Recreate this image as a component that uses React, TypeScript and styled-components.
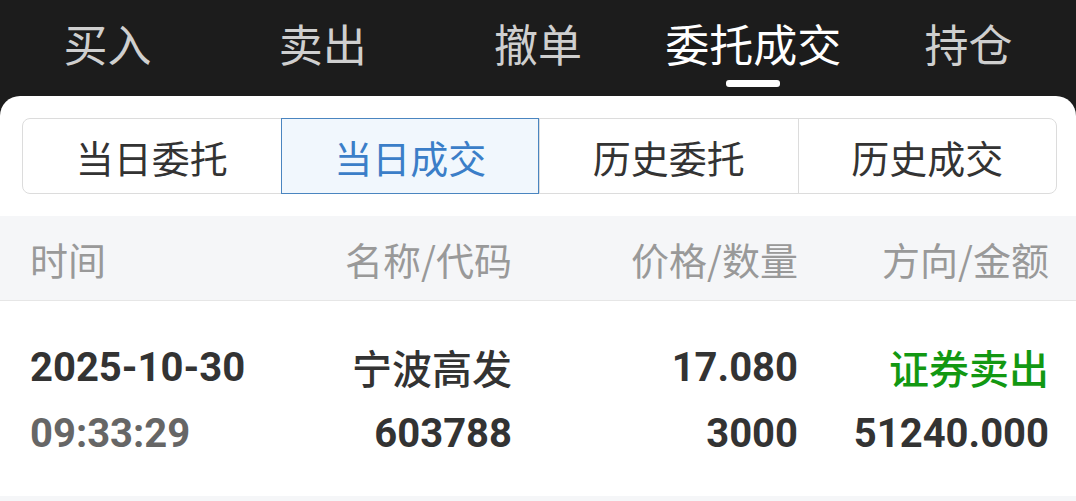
import styled, { createGlobalStyle } from 'styled-components';

const GlobalStyle = createGlobalStyle`
  html, body {
    margin: 0;
    padding: 0;
    background: #1c1c1c;
  }
  body {
    font-family: "Noto Sans CJK SC", "Noto Sans", sans-serif;
    width: 1076px;
    height: 501px;
    overflow: hidden;
  }
`;

const NUM_FONT = `Roboto, "Noto Sans CJK SC", sans-serif`;

const NavBar = styled.nav`
  display: flex;
  height: 96px;
  background: #1c1c1c;
`;

const NavTab = styled.div`
  flex: 1;
  display: flex;
  flex-direction: column;
  align-items: center;
  padding-top: 18px;
  box-sizing: border-box;
`;

const NavLabel = styled.span<{ $active?: boolean }>`
  font-size: 44px;
  line-height: 50px;
  color: ${(p) => (p.$active ? '#ffffff' : '#cfcfcf')};
  white-space: nowrap;
`;

const NavIndicator = styled.span<{ $active?: boolean }>`
  margin-top: 12px;
  width: 54px;
  height: 7px;
  border-radius: 3px;
  background: ${(p) => (p.$active ? '#ffffff' : 'transparent')};
`;

const Card = styled.main`
  background: #ffffff;
  border-radius: 20px 20px 0 0;
  height: 405px;
  overflow: hidden;
  display: flex;
  flex-direction: column;
`;

const Segments = styled.div`
  display: flex;
  margin: 22px 19px 22px 22px;
  height: 76px;
  border: 1px solid #dcdcdc;
  border-radius: 8px;
  box-sizing: border-box;
`;

const Segment = styled.div<{ $active?: boolean }>`
  flex: 1;
  display: flex;
  align-items: center;
  justify-content: center;
  font-size: 38px;
  color: ${(p) => (p.$active ? '#3b7ec8' : '#333333')};
  background: ${(p) => (p.$active ? '#f1f7fd' : 'transparent')};
  border-left: 1px solid #dcdcdc;
  margin: -1px 0;
  box-sizing: border-box;
  outline: ${(p) => (p.$active ? '1px solid #4a85c0' : 'none')};
  outline-offset: -1px;

  &:first-child {
    border-left: none;
  }
`;

const Grid = styled.div`
  display: grid;
  grid-template-columns: 230px 252px 286px 251px;
  padding: 0 27px 0 30px;
`;

const HeaderRow = styled(Grid)`
  height: 84px;
  align-items: center;
  background: #f5f6f8;
  border-bottom: 1px solid #e6e6e6;
`;

const HeaderCell = styled.div<{ $left?: boolean }>`
  font-size: 38px;
  color: #999999;
  text-align: ${(p) => (p.$left ? 'left' : 'right')};
  white-space: nowrap;
`;

const DataRow = styled(Grid)`
  padding-top: 33px;
  padding-bottom: 30px;
  grid-auto-rows: 66px;
  align-items: center;
`;

const Cell = styled.div<{ $left?: boolean; $tone?: 'dark' | 'gray' | 'green'; $cjk?: boolean }>`
  font-family: ${(p) => (p.$cjk ? '"Noto Sans CJK SC", sans-serif' : NUM_FONT)};
  font-size: ${(p) => (p.$cjk ? '40px' : '40px')};
  font-weight: ${(p) => (p.$cjk ? 500 : 700)};
  text-align: ${(p) => (p.$left ? 'left' : 'right')};
  color: ${(p) => (p.$tone === 'gray' ? '#666666' : p.$tone === 'green' ? '#129812' : '#333333')};
  white-space: nowrap;
`;

const Footer = styled.div`
  flex: 1;
  background: #f5f6f8;
`;

const navTabs = ['买入', '卖出', '撤单', '委托成交', '持仓'];
const segments = ['当日委托', '当日成交', '历史委托', '历史成交'];

export default function App() {
  return (
    <>
      <GlobalStyle />
      <NavBar>
        {navTabs.map((t, i) => (
          <NavTab key={t}>
            <NavLabel $active={i === 3}>{t}</NavLabel>
            <NavIndicator $active={i === 3} />
          </NavTab>
        ))}
      </NavBar>
      <Card>
        <Segments>
          {segments.map((s, i) => (
            <Segment key={s} $active={i === 1}>
              {s}
            </Segment>
          ))}
        </Segments>
        <HeaderRow>
          <HeaderCell $left>时间</HeaderCell>
          <HeaderCell>名称/代码</HeaderCell>
          <HeaderCell>价格/数量</HeaderCell>
          <HeaderCell>方向/金额</HeaderCell>
        </HeaderRow>
        <DataRow>
          <Cell $left>2025-10-30</Cell>
          <Cell $cjk>宁波高发</Cell>
          <Cell>17.080</Cell>
          <Cell $cjk $tone="green">证券卖出</Cell>
          <Cell $left $tone="gray">09:33:29</Cell>
          <Cell>603788</Cell>
          <Cell>3000</Cell>
          <Cell>51240.000</Cell>
        </DataRow>
        <Footer />
      </Card>
    </>
  );
}
